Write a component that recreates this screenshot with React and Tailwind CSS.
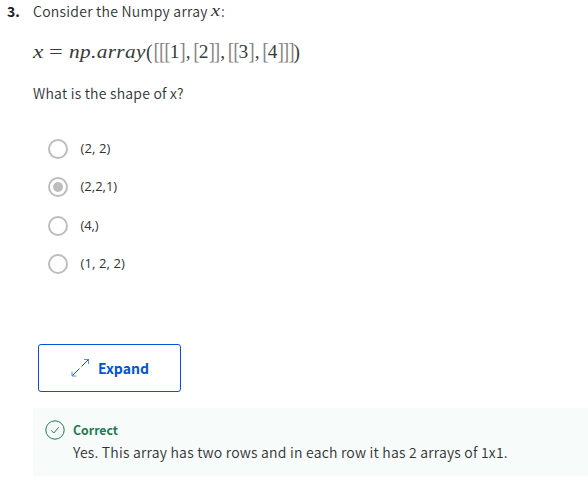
import React from 'react';

const OPTIONS = [
  { label: '(2, 2)', checked: false, row: 'h-[38px]', tracking: 'tracking-[0.1px]' },
  { label: '(2,2,1)', checked: true, row: 'h-[38px]', tracking: 'tracking-[0px]' },
  { label: '(4,)', checked: false, row: 'h-[39px]', tracking: 'tracking-[-0.1px]' },
  { label: '(1, 2, 2)', checked: false, row: 'h-[38px]', tracking: 'tracking-[0.1px]' },
];

const BODY = "font-['Noto_Sans_CJK_SC',sans-serif]";
const MATH = "font-['Liberation_Serif',serif]";

function Radio({ checked }) {
  return (
    <span className="flex size-5 shrink-0 items-center justify-center rounded-full border-2 border-[#bdbdbd]">
      {checked && <span className="size-2.5 rounded-full bg-[#bdbdbd]" />}
    </span>
  );
}

function cellWidth(ch) {
  if (ch === '[' || ch === ']') return 'w-[5.38px] scale-y-[1.2] text-[#858585]';
  if (ch === '(' || ch === ')') return 'w-[7.5px] scale-y-[1.12]';
  if (ch === ',') return 'w-[8.7px] pl-px';
  return 'w-[9.68px]';
}

function Formula() {
  return (
    <div className={`${MATH} mt-[12px] flex h-9 items-center whitespace-pre pl-[33px] text-[19.4px] leading-9 text-[#373a3c]`}>
      <span className="w-[16px] origin-left scale-x-[1.2] italic">x</span>
      <span className="w-[20px] origin-left scale-x-[1.25]">=</span>
      <span className="w-[77px] origin-left scale-x-[1.1] italic tracking-[0.3px]">np.array</span>
      {[...'([[[1],[2]],[[3],[4]]])'].map((ch, i) => (
        <span key={i} className={cellWidth(ch)}>{ch}</span>
      ))}
    </div>
  );
}

export default function App() {
  return (
    <main className={`${BODY} h-[490px] w-[588px] overflow-hidden bg-white text-[14px] font-[350] text-[#303335]`}>
      <div className="flex h-[22px] items-center whitespace-pre pl-[7px] leading-[22px]">
        <span className="w-[26px] font-bold text-[#1f1f1f]">3.</span>
        <span className="w-[178px] tracking-[0.26px]">Consider the Numpy array </span>
        <span className={`${MATH} w-[10px] origin-left scale-x-[1.2] text-[17px] italic`}>x</span>
        <span>:</span>
      </div>
      <Formula />
      <p className="mt-[11px] h-6 pl-[33px] leading-6 tracking-[0.22px]">What is the shape of x?</p>
      <div className="mt-[25px] pl-12">
        {OPTIONS.map((o) => (
          <div key={o.label} className={`flex items-center gap-[12.5px] ${o.row}`}>
            <Radio checked={o.checked} />
            <span className={`font-['Open_Sans',sans-serif] text-[13px] font-normal ${o.tracking}`}>{o.label}</span>
          </div>
        ))}
      </div>
      <button className="ml-[38px] mt-[61px] flex h-12 w-[143px] items-center rounded-[3px] border border-[#0056d2] pl-8 font-bold text-[#0056d2]">
        <svg width="20" height="20" viewBox="0 0 20 20" fill="none" stroke="currentColor" strokeWidth="1">
          <path d="M13 1.5h4.5v4.5M5.5 18H1v-4.5" strokeOpacity="0.65" />
          <path d="M17.5 1.5L10.5 8.5M8.5 10.5L1.5 17.5" />
        </svg>
        <span className="ml-[7px]">Expand</span>
      </button>
      <section className="ml-[33px] mt-4 flex h-[68px] bg-[#f7fbf9] pl-3 pt-3">
        <svg width="20" height="20" viewBox="0 0 20 20" fill="none" stroke="#1d7c50">
          <circle cx="10" cy="10" r="9.2" />
          <path d="M6 10.2l2.8 2.8 5-5.8" />
        </svg>
        <div className="ml-2">
          <h3 className="h-[21px] text-[12.3px] font-bold leading-[20px] text-[#1d7c50]">Correct</h3>
          <p className="leading-[23px] tracking-[0.215px]">Yes. This array has two rows and in each row it has 2 arrays of 1x1.</p>
        </div>
      </section>
    </main>
  );
}
